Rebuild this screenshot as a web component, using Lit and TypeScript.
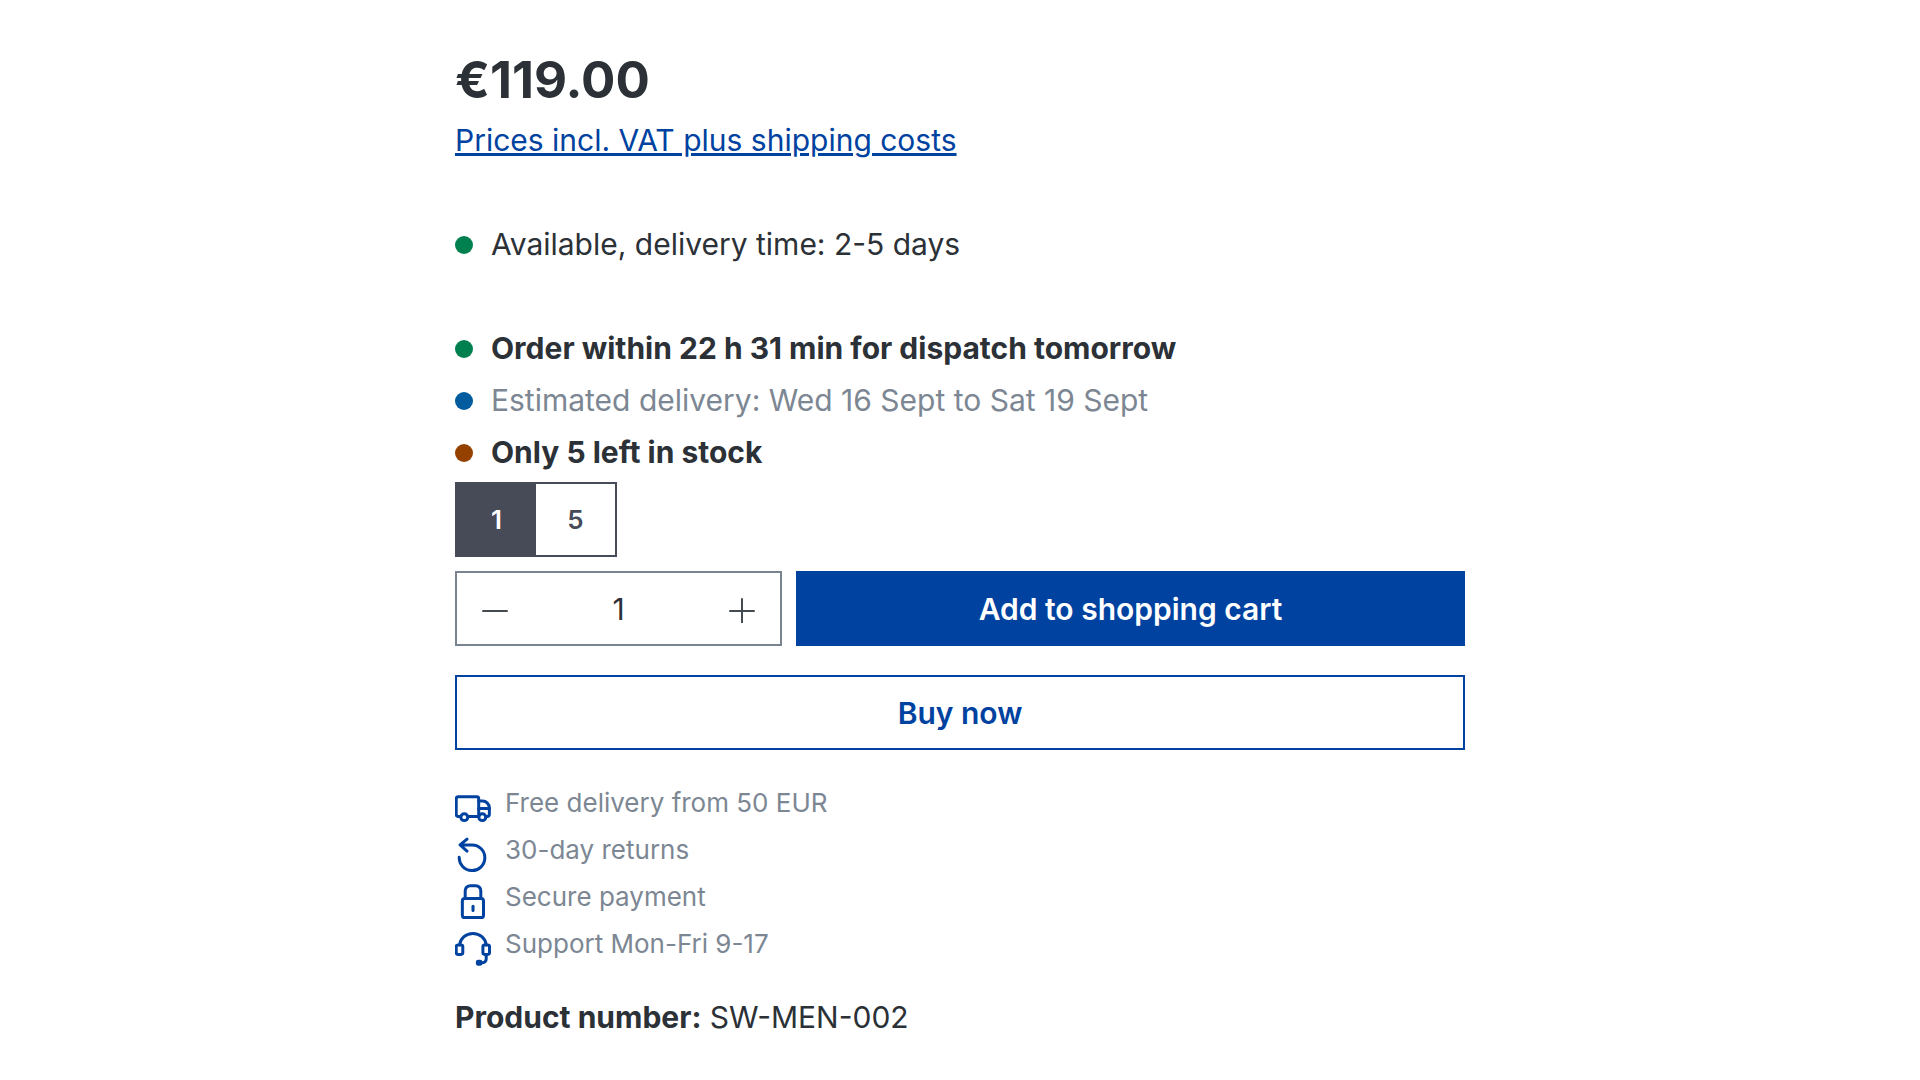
import { LitElement, html, css, svg } from "lit";
import { customElement, state } from "lit/decorators.js";
import { classMap } from "lit/directives/class-map.js";

const truck = svg`
  <path d="M3.6 17.7H2.1A1.3 1.3 0 0 1 .8 16.4V5.8A1.3 1.3 0 0 1 2.1 4.5H14.5A1.3 1.3 0 0 1 15.8 5.8V17.7H9"/>
  <path d="M15.8 7.4H18.4A4.5 4.5 0 0 1 22.9 11.9V16.4A1.3 1.3 0 0 1 21.6 17.7H21"/>
  <path d="M15.8 12.4H22.9"/>
  <circle cx="6.2" cy="18.1" r="2.3"/>
  <circle cx="18.2" cy="18.1" r="2.3"/>`;

const returns = svg`
  <path d="M8 1.4 3.4 5.3 8 9.4M3.4 5.3H11.4A8.55 8.55 0 1 1 2.8 13.5"/>`;

const lock = svg`
  <path d="M6.8 9.6V4.5A3.4 3.4 0 0 1 10.2 1.1H13.8A3.4 3.4 0 0 1 17.2 4.5V9.6"/>
  <rect x="4.9" y="9.7" width="14.1" height="12.7" rx="1.6"/>
  <path d="M12 14.8V17.6"/>`;

const headset = svg`
  <path d="M3.1 9.2A8.9 8.5 0 0 1 20.8 9.2"/>
  <rect x=".8" y="9.3" width="4.4" height="6.3" rx="1.2"/>
  <rect x="18.6" y="9.3" width="4.4" height="6.3" rx="1.2"/>
  <path d="M20.8 15.6V18.7A2.4 2.4 0 0 1 18.4 21.1H16"/>
  <rect x="14.9" y="20.1" width="2.4" height="2.1" rx=".6" fill="currentColor"/>`;

const benefits = [
  { icon: truck, text: "Free delivery from 50 EUR" },
  { icon: returns, text: "30-day returns" },
  { icon: lock, text: "Secure payment" },
  { icon: headset, text: "Support Mon-Fri 9-17" },
];

const packs = [1, 5];

@customElement("app-root")
export class AppRoot extends LitElement {
  static styles = css`
    :host {
      display: block;
      padding: 46px 24px 24px;
      background: #fff;
      color: #2b3136;
      font: 400 30px/52px Inter, "Liberation Sans", sans-serif;
    }
    * {
      box-sizing: border-box;
    }
    button,
    input {
      margin: 0;
      padding: 0;
      border: 0;
      border-radius: 0;
      background: none;
      color: inherit;
      font: inherit;
    }
    button {
      cursor: pointer;
    }
    .buy-box {
      max-width: 1010px;
      margin: 0 auto;
    }
    .price {
      margin: 0;
      font-size: 51px;
      font-weight: 700;
      line-height: 68px;
    }
    .tax {
      display: block;
      width: fit-content;
      color: #0042a0;
      text-underline-offset: 2px;
      text-decoration-thickness: 3px;
    }
    .status {
      display: flex;
      align-items: center;
      gap: 18px;
      margin: 0;
    }
    .delivery {
      margin: 52px 0;
    }
    .dot {
      flex: none;
      width: 18px;
      height: 18px;
      margin-top: 2px;
      border-radius: 50%;
    }
    .green {
      background: #00804f;
    }
    .blue {
      background: #005c9e;
    }
    .brown {
      background: #944100;
    }
    .strong {
      font-weight: 700;
    }
    .muted {
      color: #7c8793;
    }
    .packs {
      display: flex;
      width: fit-content;
      margin-top: 4px;
      border: 2px solid #474a57;
    }
    .pack {
      width: 79px;
      height: 71px;
      color: #474a57;
      font-size: 26px;
      font-weight: 600;
    }
    .pack.active {
      background: #474a57;
      color: #fff;
    }
    .purchase {
      display: grid;
      grid-template-columns: 327px 1fr;
      gap: 14px;
      margin: 14px 0 29px;
    }
    .quantity {
      display: flex;
      height: 75px;
      border: 2px solid #798490;
    }
    .step {
      display: flex;
      flex: none;
      align-items: center;
      justify-content: center;
      width: 76px;
    }
    .step-icon {
      width: 28px;
      height: 28px;
      fill: none;
      stroke: #434b51;
      stroke-width: 2;
      stroke-linecap: round;
    }
    .amount {
      flex: 1;
      min-width: 0;
      text-align: center;
    }
    .cart,
    .buy {
      height: 75px;
      font-weight: 600;
    }
    .cart {
      background: #0042a0;
      color: #fff;
    }
    .buy {
      display: block;
      width: 100%;
      border: 2px solid #0042a0;
      color: #0042a0;
    }
    .benefits {
      margin: 29px 0 24px;
      padding: 0;
      list-style: none;
      font-size: 26px;
      line-height: 47px;
    }
    .benefit {
      display: flex;
      align-items: flex-end;
      gap: 14px;
    }
    .icon {
      flex: none;
      width: 36px;
      height: 36px;
      color: #0042a0;
      fill: none;
      stroke: currentColor;
      stroke-width: 2;
      stroke-linecap: round;
      stroke-linejoin: round;
    }
    .product {
      margin: 0;
    }
  `;

  @state() private pack = 1;
  @state() private amount = 1;

  private step(by: number) {
    this.amount = Math.max(1, this.amount + by);
  }

  private onAmount(e: Event) {
    const value = parseInt((e.target as HTMLInputElement).value, 10);
    this.amount = value > 0 ? value : 1;
  }

  render() {
    return html`
      <main class="buy-box">
        <p class="price">€119.00</p>
        <a class="tax" href="#shipping">Prices incl. VAT plus shipping costs</a>
        <p class="status delivery">
          <span class="dot green"></span>Available, delivery time: 2-5 days
        </p>
        <p class="status strong">
          <span class="dot green"></span>Order within 22 h 31 min for dispatch tomorrow
        </p>
        <p class="status muted">
          <span class="dot blue"></span>Estimated delivery: Wed 16 Sept to Sat 19 Sept
        </p>
        <p class="status strong">
          <span class="dot brown"></span>Only 5 left in stock
        </p>
        <div class="packs" role="group" aria-label="Quick quantity">
          ${packs.map(
            (n) => html`<button
              type="button"
              class=${classMap({ pack: true, active: n === this.pack })}
              aria-pressed=${n === this.pack ? "true" : "false"}
              @click=${() => {
                this.pack = n;
                this.amount = n;
              }}
            >${n}</button>`
          )}
        </div>
        <div class="purchase">
          <div class="quantity">
            <button type="button" class="step" aria-label="Decrease quantity" @click=${() => this.step(-1)}>
              <svg class="step-icon" viewBox="0 0 28 28" aria-hidden="true"><path d="M2 16H26"/></svg>
            </button>
            <input
              class="amount"
              type="text"
              inputmode="numeric"
              aria-label="Quantity"
              .value=${String(this.amount)}
              @change=${this.onAmount}
            />
            <button type="button" class="step" aria-label="Increase quantity" @click=${() => this.step(1)}>
              <svg class="step-icon" viewBox="0 0 28 28" aria-hidden="true"><path d="M2 16H26M14 4V28"/></svg>
            </button>
          </div>
          <button type="button" class="cart">Add to shopping cart</button>
        </div>
        <button type="button" class="buy">Buy now</button>
        <ul class="benefits">
          ${benefits.map(
            (b) => html`<li class="benefit muted">
              <svg class="icon" viewBox="0 0 24 24" aria-hidden="true">${b.icon}</svg>
              <span>${b.text}</span>
            </li>`
          )}
        </ul>
        <p class="product"><strong>Product number:</strong> SW-MEN-002</p>
      </main>
    `;
  }
}
